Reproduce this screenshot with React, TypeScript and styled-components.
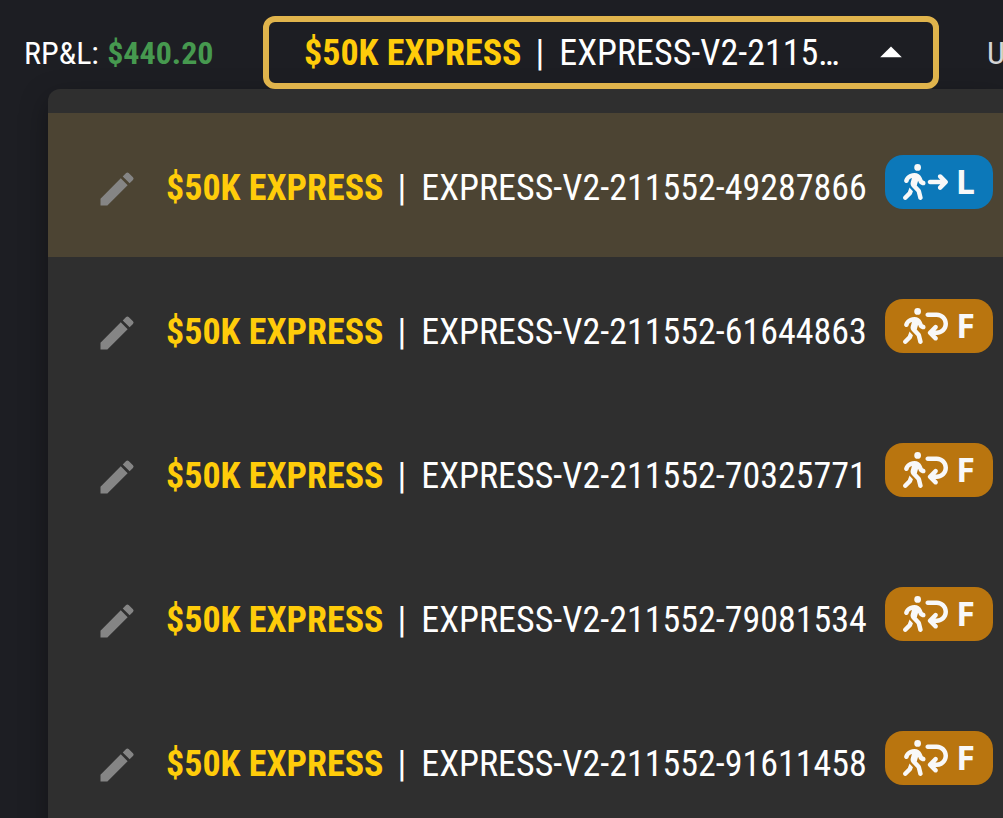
import React from "react";
import styled, { createGlobalStyle } from "styled-components";
import { MdArrowDropUp, MdEdit } from "react-icons/md";
import {
  FaPersonWalkingArrowLoopLeft,
  FaPersonWalkingArrowRight,
} from "react-icons/fa6";

const GlobalStyle = createGlobalStyle`
  * { box-sizing: border-box; }
  body {
    margin: 0;
    background: #1d1e23;
    color: #ffffff;
    font-family: "Roboto Condensed", "Liberation Sans Narrow", Roboto, sans-serif;
  }
`;

const Page = styled.main`
  height: 100vh;
  overflow: hidden;
`;

const Header = styled.header`
  display: flex;
  align-items: center;
  gap: 48px;
  padding: 16px 0 0 24px;
`;

const Stat = styled.div`
  flex: none;
  min-width: 191px;
  font-size: 32px;
  line-height: 42px;
  padding-top: 1px;
  white-space: nowrap;
`;

const Profit = styled.strong`
  margin-left: 1px;
  color: #46994f;
`;

const Clipped = styled(Stat)`
  min-width: 0;
  width: 16px;
  overflow: hidden;
  color: #d4d4d6;
`;

const AccountSelect = styled.button`
  flex: 1;
  min-width: 0;
  display: flex;
  align-items: center;
  gap: 24px;
  height: 73px;
  padding: 0 16px 0 35px;
  border: 6px solid #e0b44c;
  border-radius: 12px;
  background: transparent;
  color: inherit;
  font: inherit;
  font-size: 36px;
  line-height: 44px;
  text-align: left;
  cursor: pointer;

  svg {
    flex: none;
    width: 52px;
    height: 52px;
  }
`;

const Label = styled.span`
  display: flex;
  min-width: 0;
  white-space: pre;
`;

const SelectLabel = styled(Label)`
  flex: 1;
  padding-top: 1px;
`;

const Plan = styled.strong`
  color: #ffcc0a;
`;

const Divider = styled.span`
  padding: 0 15px 0 14px;
`;

const AccountId = styled.span`
  overflow: hidden;
  text-overflow: ellipsis;
`;

const Menu = styled.ul`
  list-style: none;
  margin: 0 0 0 48px;
  padding: 24px 0;
  border-top-left-radius: 12px;
  background: #2f2f2f;
  box-shadow: 0 10px 28px rgba(0, 0, 0, 0.35);
`;

const Row = styled.li<{ $selected?: boolean }>`
  display: flex;
  align-items: center;
  height: 144px;
  padding: 0 10px 0 47px;
  background: ${(p) => (p.$selected ? "#4c4433" : "transparent")};
  font-size: 36px;
  line-height: 44px;
`;

const EditButton = styled.button`
  display: flex;
  flex: none;
  margin-right: 27px;
  padding: 8px 0 0;
  border: 0;
  background: none;
  color: #858585;
  cursor: pointer;

  svg {
    width: 44px;
    height: 44px;
  }
`;

const RowLabel = styled(Label)`
  flex: 1;
  padding-top: 6px;
`;

const Badge = styled.span<{ $live?: boolean }>`
  display: flex;
  flex: none;
  align-items: center;
  gap: 8px;
  height: 54px;
  margin-bottom: 6px;
  padding: 0 18px;
  border-radius: 18px;
  background: ${(p) => (p.$live ? "#0c78b9" : "#b9750f")};
  color: #f8f8f8;
  font-family: "Open Sans", sans-serif;
  font-size: 34px;
  font-weight: 700;
  line-height: 48px;

  svg {
    width: 45px;
    height: 36px;
  }
`;

const BadgeLetter = styled.span`
  padding-bottom: 2px;
`;

type Account = { id: string; live?: boolean };

const accounts: Account[] = [
  { id: "EXPRESS-V2-211552-49287866", live: true },
  { id: "EXPRESS-V2-211552-61644863" },
  { id: "EXPRESS-V2-211552-70325771" },
  { id: "EXPRESS-V2-211552-79081534" },
  { id: "EXPRESS-V2-211552-91611458" },
];

function AccountName({ id }: { id: string }) {
  return (
    <>
      <Plan>$50K EXPRESS</Plan>
      <Divider>|</Divider>
      <AccountId>{id}</AccountId>
    </>
  );
}

export default function App() {
  return (
    <Page>
      <GlobalStyle />
      <Header>
        <Stat>
          RP&amp;L: <Profit>$440.20</Profit>
        </Stat>
        <AccountSelect type="button" aria-haspopup="true" aria-expanded="true">
          <SelectLabel>
            <AccountName id={accounts[0].id} />
          </SelectLabel>
          <MdArrowDropUp />
        </AccountSelect>
        <Clipped>U</Clipped>
      </Header>
      <Menu>
        {accounts.map((account, i) => (
          <Row key={account.id} $selected={i === 0}>
            <EditButton type="button" aria-label={`Edit ${account.id}`}>
              <MdEdit />
            </EditButton>
            <RowLabel>
              <AccountName id={account.id} />
            </RowLabel>
            <Badge $live={account.live}>
              {account.live ? <FaPersonWalkingArrowRight /> : <FaPersonWalkingArrowLoopLeft />}
              <BadgeLetter>{account.live ? "L" : "F"}</BadgeLetter>
            </Badge>
          </Row>
        ))}
      </Menu>
    </Page>
  );
}
